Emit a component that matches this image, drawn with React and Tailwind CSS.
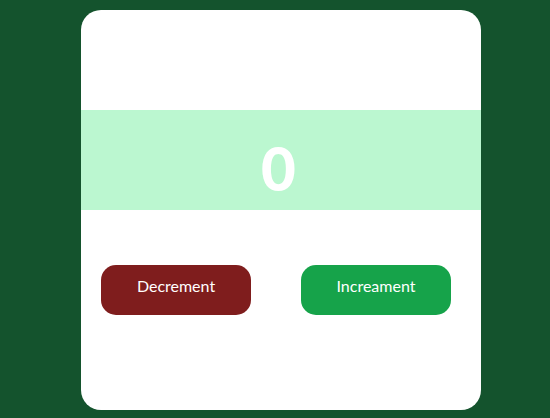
import { useState } from 'react';

const App = () => {
    const [count, setCount] = useState(0);

    return (
        <div className="min-h-[418px] w-full bg-[#14532d] pt-[10px]" style={{ fontFamily: 'Lato, "Open Sans", sans-serif' }}>
            <div className="ml-[81px] flex h-[400px] w-[400px] flex-col overflow-hidden rounded-[20px] bg-white">
                <div className="h-[100px]" />
                <div className="flex h-[100px] items-start justify-center bg-[#bbf7d0] pr-[5px] pt-[28px]">
                    <span className="text-[60px] font-black leading-none text-white">{count}</span>
                </div>
                <div className="flex gap-[50px] pl-5 pt-[55px]">
                    <button
                        className="flex h-[50px] w-[150px] items-start justify-center rounded-[15px] bg-[#7f1d1d] pt-[9px] text-base text-white"
                        onClick={() => setCount(count - 1)}
                    >
                        Decrement
                    </button>
                    <button
                        className="flex h-[50px] w-[150px] items-start justify-center rounded-[15px] bg-[#16a34a] pt-[9px] text-base text-white"
                        onClick={() => setCount(count + 1)}
                    >
                        Increament
                    </button>
                </div>
            </div>
        </div>
    );
};

export default App;
